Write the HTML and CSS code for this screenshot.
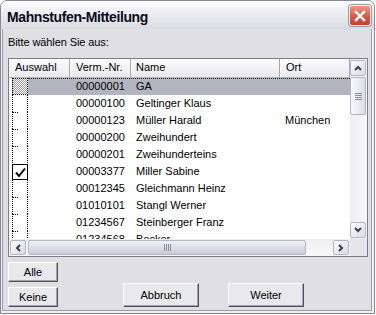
FILE: index.html
```html
<!DOCTYPE html>
<html lang="de">
<head>
<meta charset="utf-8">
<title>Mahnstufen-Mitteilung</title>
<link rel="stylesheet" href="styles.css">
</head>
<body>
<div class="window">
  <div class="titlebar">
    <span class="title">Mahnstufen-Mitteilung</span>
    <div class="close">
      <svg width="12" height="12" viewBox="0 0 12 12"><path d="M2 2 L10 10 M10 2 L2 10" stroke="#fff" stroke-width="2.4" stroke-linecap="square" fill="none"/></svg>
    </div>
  </div>
  <div class="body">
    <div class="prompt">Bitte wählen Sie aus:</div>
    <div class="list">
      <div class="view">
        <div class="header">
          <div class="hcell c1">Auswahl</div>
          <div class="hcell c2">Verm.-Nr.</div>
          <div class="hcell c3">Name</div>
          <div class="hcell c4">Ort</div>
        </div>
        <div class="rows">
          <div class="row sel"><div class="cell c1"><span class="chk focus"></span></div><div class="cell c2">00000001</div><div class="cell c3">GA</div><div class="cell c4"></div></div>
          <div class="row"><div class="cell c1"><span class="chk first"></span></div><div class="cell c2">00000100</div><div class="cell c3">Geltinger Klaus</div><div class="cell c4"></div></div>
          <div class="row"><div class="cell c1"><span class="chk"></span></div><div class="cell c2">00000123</div><div class="cell c3">Müller Harald</div><div class="cell c4">München</div></div>
          <div class="row"><div class="cell c1"><span class="chk"></span></div><div class="cell c2">00000200</div><div class="cell c3">Zweihundert</div><div class="cell c4"></div></div>
          <div class="row"><div class="cell c1"><span class="chk"></span></div><div class="cell c2">00000201</div><div class="cell c3">Zweihunderteins</div><div class="cell c4"></div></div>
          <div class="row"><div class="cell c1"><span class="chk checked"><svg width="13" height="13" viewBox="0 0 13 13"><path d="M2 6.5 L5 10 L11 2.5" stroke="#000" stroke-width="2" fill="none"/></svg></span></div><div class="cell c2">00003377</div><div class="cell c3">Miller Sabine</div><div class="cell c4"></div></div>
          <div class="row"><div class="cell c1"><span class="chk first"></span></div><div class="cell c2">00012345</div><div class="cell c3">Gleichmann Heinz</div><div class="cell c4"></div></div>
          <div class="row"><div class="cell c1"><span class="chk"></span></div><div class="cell c2">01010101</div><div class="cell c3">Stangl Werner</div><div class="cell c4"></div></div>
          <div class="row"><div class="cell c1"><span class="chk"></span></div><div class="cell c2">01234567</div><div class="cell c3">Steinberger Franz</div><div class="cell c4"></div></div>
          <div class="row"><div class="cell c1"><span class="chk"></span></div><div class="cell c2">01234568</div><div class="cell c3">Becker</div><div class="cell c4"></div></div>
        </div>
      </div>
      <div class="vscroll">
        <div class="sbtn"><svg width="8" height="6" viewBox="0 0 8 6"><path d="M1 5 L4 2 L7 5" stroke="#3f3f4c" stroke-width="2" fill="none"/></svg></div>
        <div class="vthumb"><span class="grip-h"></span></div>
        <div class="vtrack"></div>
        <div class="sbtn"><svg width="8" height="6" viewBox="0 0 8 6"><path d="M1 1 L4 4 L7 1" stroke="#3f3f4c" stroke-width="2" fill="none"/></svg></div>
      </div>
      <div class="hscroll">
        <div class="sbtn"><svg width="6" height="8" viewBox="0 0 6 8"><path d="M5 1 L2 4 L5 7" stroke="#3f3f4c" stroke-width="2" fill="none"/></svg></div>
        <div class="hthumb"><span class="grip-v"></span></div>
        <div class="htrack"></div>
        <div class="sbtn"><svg width="6" height="8" viewBox="0 0 6 8"><path d="M1 1 L4 4 L1 7" stroke="#3f3f4c" stroke-width="2" fill="none"/></svg></div>
      </div>
      <div class="corner"></div>
    </div>
    <div class="btnrow first-row">
      <button class="btn small">Alle</button>
    </div>
    <div class="btnrow second-row">
      <button class="btn small">Keine</button>
      <button class="btn big abbruch">Abbruch</button>
      <button class="btn big weiter">Weiter</button>
    </div>
  </div>
</div>
</body>
</html>
```

FILE: styles.css
```css
html, body {
  margin: 0;
  padding: 0;
  background: #ffffff;
}
body {
  font-family: "Liberation Sans", Arial, sans-serif;
  font-size: 11px;
  color: #000;
}
.window {
  width: 375px;
  height: 314px;
  box-sizing: border-box;
  border: 1px solid #85869a;
  border-radius: 7px 7px 0 0;
  background: #f1f1f5;
  display: flex;
  flex-direction: column;
  overflow: hidden;
}
.titlebar {
  height: 28px;
  flex: none;
  display: flex;
  justify-content: space-between;
  align-items: flex-start;
  padding: 0 3px 0 6px;
  background: linear-gradient(#fdfdfe 0%, #eeeef3 40%, #dadae3 100%);
}
.title {
  font-weight: bold;
  font-size: 14px;
  letter-spacing: -0.4px;
  line-height: 16px;
  margin-top: 8px;
  color: #0b0b16;
}
.close {
  width: 22px;
  height: 21px;
  margin-top: 4px;
  box-sizing: border-box;
  border: 1px solid #fbe9e6;
  border-radius: 3px;
  background: linear-gradient(#eb9a8a 0%, #d9594b 55%, #c5402f 100%);
  box-shadow: 0 0 0 1px #9b9bab;
  display: flex;
  align-items: center;
  justify-content: center;
}
.body {
  flex: 1;
  margin: 0 2px 2px 1px;
  border: 1px solid #9c9cab;
  border-top: none;
  background: #e0dfe3;
  padding: 7px 3px 3px 5px;
  display: flex;
  flex-direction: column;
}
.prompt {
  height: 13px;
  line-height: 13px;
  letter-spacing: -0.1px;
}
.list {
  margin-top: 9px;
  width: 360px;
  height: 199px;
  box-sizing: border-box;
  border: 1px solid #7b7b8c;
  background: #fff;
  display: grid;
  grid-template-columns: 341px 17px;
  grid-template-rows: 180px 17px;
}
.view {
  grid-row: 1;
  grid-column: 1;
  overflow: hidden;
}
.header {
  display: flex;
  height: 19px;
  box-sizing: border-box;
  border-bottom: 1px solid #b3b3bf;
  background: linear-gradient(#fbfbfc, #ebeaef);
}
.hcell {
  box-sizing: border-box;
  border-right: 1px solid #a7a7b3;
  box-shadow: inset 1px 0 #fff;
  padding-left: 6px;
  line-height: 17px;
  white-space: nowrap;
}
.hcell.c3 { padding-left: 5px; }
.c1 { width: 61px; flex: none; }
.c2 { width: 61px; flex: none; }
.c3 { width: 149px; flex: none; }
.c4 { width: 70px; flex: none; }
.rows {
  height: 161px;
  overflow: hidden;
}
.row {
  display: flex;
  height: 17px;
  line-height: 17px;
  position: relative;
  white-space: nowrap;
}
.cell {
  box-sizing: border-box;
  overflow: hidden;
}
.row .c2 { padding-left: 6px; }
.row .c3 { padding-left: 5px; }
.row .c4 { padding-left: 5px; }
.row.sel {
  background: linear-gradient(90deg, transparent 19px, #b2b4bf 19px);
}
.row.sel::after {
  content: "";
  position: absolute;
  left: 19px;
  right: 0;
  top: 0;
  border-top: 1px dotted #222;
}
.chk {
  display: block;
  position: relative;
  width: 16px;
  height: 17px;
  margin-left: 3px;
  box-sizing: border-box;
  border-left: 1px dotted #000;
  border-right: 1px dotted #000;
}
.chk::before {
  content: "";
  position: absolute;
  left: -1px;
  top: 0;
  width: 6px;
  border-top: 1px dotted #000;
}
.chk.first::before { display: none; }
.chk.focus {
  border: 1px dotted #000;
  background: repeating-conic-gradient(#9c9ca4 0 25%, #fff 0 50%) 0 0 / 2px 2px;
}
.chk.focus::before { display: none; }
.chk.checked {
  border: 1px solid #000;
  height: 16px;
  margin-top: 1px;
  display: flex;
  align-items: center;
  justify-content: center;
  background: #fff;
}
.chk.checked::before { display: none; }
.vscroll {
  grid-row: 1;
  grid-column: 2;
  background: linear-gradient(90deg, #eeeef2, #f8f8fa);
  display: flex;
  flex-direction: column;
  padding: 1px 1px 1px 0;
}
.sbtn {
  width: 16px;
  height: 16px;
  flex: none;
  box-sizing: border-box;
  border: 1px solid #b5b5c3;
  border-radius: 2px;
  background: linear-gradient(135deg, #fdfdfe, #d9d9e3);
  display: flex;
  align-items: center;
  justify-content: center;
}
.hscroll .sbtn { height: 15px; }
.vthumb {
  height: 38px;
  margin-top: 1px;
  box-sizing: border-box;
  border: 1px solid #b5b5c3;
  border-radius: 2px;
  background: linear-gradient(90deg, #fbfbfd, #dcdce6);
  display: flex;
  align-items: center;
  justify-content: center;
}
.grip-h {
  width: 7px;
  height: 7px;
  background: repeating-linear-gradient(#8d8d9c 0 1px, transparent 1px 2px);
}
.vtrack { flex: 1; }
.hscroll {
  grid-row: 2;
  grid-column: 1;
  background: linear-gradient(#eeeef2, #fafafc);
  display: flex;
  padding: 1px;
}
.hthumb {
  width: 278px;
  margin-left: 2px;
  height: 15px;
  box-sizing: border-box;
  border: 1px solid #b5b5c3;
  border-radius: 2px;
  background: linear-gradient(#f1f1f6, #cbcbd8);
  display: flex;
  align-items: center;
  justify-content: center;
}
.grip-v {
  width: 7px;
  height: 7px;
  background: repeating-linear-gradient(90deg, #8d8d9c 0 1px, transparent 1px 2px);
}
.htrack { flex: 1; }
.corner {
  grid-row: 2;
  grid-column: 2;
  background: #e6e5ea;
}
.btnrow {
  display: flex;
  align-items: flex-end;
}
.first-row { margin-top: 5px; }
.second-row { margin-top: 1px; }
.btn {
  box-sizing: border-box;
  font-family: "Liberation Sans", Arial, sans-serif;
  font-size: 11px;
  color: #000;
  background: #e9e8ec;
  border: 1px solid;
  border-color: #ffffff #4f4f58 #4f4f58 #ffffff;
  box-shadow: inset -1px -1px #a3a3ad;
  padding: 0;
  margin: 0;
}
.small { width: 50px; height: 20px; }
.big { width: 76px; height: 24px; }
.abbruch { margin-left: 65px; }
.weiter { margin-left: 29px; }
```
